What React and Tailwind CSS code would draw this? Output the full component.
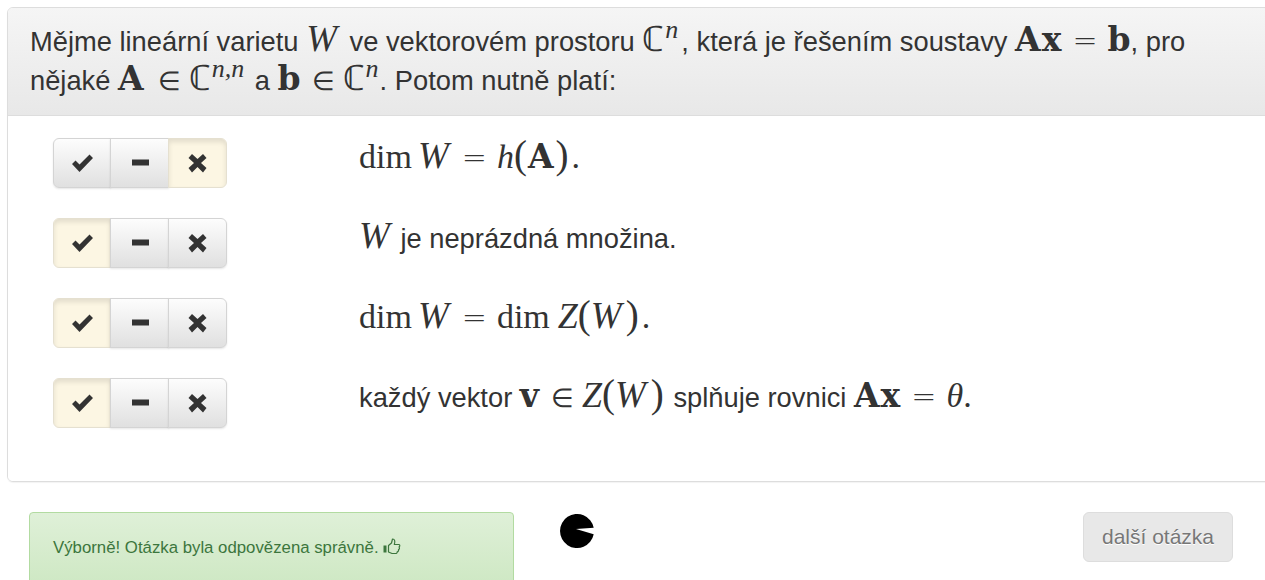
const upright = '[font-family:"Liberation_Serif",serif] text-[34px] leading-none'

function V({ children, className = '' }) {
  return <span className={`[font-family:"Liberation_Serif",serif] text-[34px] leading-none italic ${className}`}>{children}</span>
}

// the W of the formulas is wider than Liberation's
function W({ className = 'mr-[4px]' }) {
  return <span className={`[font-family:"Liberation_Serif",serif] text-[37px] leading-none italic ${className}`}>W</span>
}

function B({ children, className = '' }) {
  return <span className={`[font-family:"DejaVu_Serif",serif] text-[33px] leading-none font-bold ${className}`}>{children}</span>
}

function Eq({ className = 'mx-[10px]' }) {
  return <span className={`[font-family:"DejaVu_Sans",sans-serif] text-[30px] leading-none font-extralight ${className}`}>=</span>
}

function In({ className = 'ml-[11px] mr-[8px]' }) {
  return <span className={`[font-family:"Liberation_Serif",serif] text-[26px] leading-none ${className}`}>∈</span>
}

function Paren({ children, className = '' }) {
  return <span className={`[font-family:"Liberation_Serif",serif] text-[39px] leading-none ${className}`}>{children}</span>
}

function CC({ sup, className = 'mr-[3px]' }) {
  return (
    <span className="whitespace-nowrap">
      <span className='[font-family:"DejaVu_Sans",serif] text-[35px] leading-none font-extralight'>ℂ</span>
      <sup className={`[font-family:"Liberation_Serif",serif] text-[26px] leading-none italic top-[-0.5em] ml-[1px] ${className}`}>{sup}</sup>
    </span>
  )
}

function Pacman() {
  return (
    <svg width="35" height="34" viewBox="0 0 35 34" className="blur-[0.4px]">
      <path d="M33.7 13.7 A17 17 0 1 0 33.7 20.3 L16 15 Z" fill="#000" />
    </svg>
  )
}

function ThumbIcon() {
  return (
    <svg width="18" height="18" viewBox="0 0 18 18" className="ml-[4px] shrink-0" fill="none">
      <rect x="0.5" y="7.5" width="3" height="7" fill="#3c763d" />
      <path d="M5.5 7.5 L8.5 5 L9.5 1 C11.5 0.8 12.5 3 11.3 6.5 L16 6.5 C17.2 7 17 8.5 16 9 C16.8 10 16.5 11.3 15.5 11.5 C15.9 12.8 15 13.8 14.2 13.8 C14.3 15 13.5 15.5 12.5 15.5 L9 15.5 L5.5 14 Z" stroke="#3c763d" strokeWidth="1.2" strokeLinejoin="round" />
    </svg>
  )
}

function ToggleGroup({ active }) {
  const items = [
    {
      key: 'yes',
      icon: <path d="M0 11 L3.5 7.5 L7.5 11.5 L17.5 1.5 L21 5 L7.5 19 Z" fill="#333" />,
    },
    {
      key: 'skip',
      icon: <rect x="3" y="6.5" width="17" height="6" fill="#333" />,
    },
    {
      key: 'no',
      icon: <path d="M5 1 L10.5 6 L16 1 L19.5 5 L14 10 L19.5 15 L16 19.5 L10.5 14 L5 19.5 L1.5 15 L7 10 L1.5 5 Z" fill="#333" />,
    },
  ]
  return (
    <div className="flex h-[50px] w-[174px] shrink-0">
      {items.map((item, i) => {
        const isActive = item.key === active
        return (
          <div
            key={item.key}
            className={`flex h-full w-[58px] items-center justify-center border border-[#d4d4d4] ${i > 0 ? '-ml-px w-[59px]' : ''} ${i === 0 ? 'rounded-l-[6px]' : ''} ${i === 2 ? 'rounded-r-[6px]' : ''} ${isActive ? 'bg-[#fcf6e3] shadow-[inset_0_3px_5px_rgba(0,0,0,0.1)] border-[#e5e0d0]' : 'bg-gradient-to-b from-[#fdfdfd] to-[#e0e0e0] shadow-[0_1px_2px_rgba(0,0,0,0.1)]'}`}
          >
            <svg width="21" height="21" viewBox="0 0 21 21">{item.icon}</svg>
          </div>
        )
      })}
    </div>
  )
}

function Row({ active, lift, children }) {
  return (
    <div className="flex h-[50px] items-start">
      <ToggleGroup active={active} />
      <div className={`ml-[132px] h-[40px] text-[27.3px] leading-[38px] whitespace-nowrap ${lift}`}>{children}</div>
    </div>
  )
}

export default function App() {
  return (
    <div className='h-[580px] w-[1265px] overflow-hidden bg-white font-["Liberation_Sans",Arial,sans-serif] text-[#333]'>
      <div className="ml-[7px] mt-[7px] w-[1290px] overflow-hidden rounded-[6px] border border-[#ddd] shadow-[0_1px_1px_rgba(0,0,0,0.05)]">
        <div className="h-[108px] border-b border-[#ddd] bg-gradient-to-b from-[#f5f5f5] to-[#e8e8e8] pl-[22px] pt-[12px] text-[27.3px] leading-[39px]">
          <div className="whitespace-nowrap">
            Mějme lineární varietu <W className="mr-[5px]" /> ve vektorovém prostoru <CC sup="n" />, která je řešením soustavy <B className="tracking-[1px]">Ax</B><Eq /><B>b</B>, pro
          </div>
          <div className="whitespace-nowrap">
            nějaké <B className="mr-[3px]">A</B><In /><CC sup="n,n" /> a <B>b</B><In /><CC sup="n" className="mr-[1px]" />. Potom nutně platí:
          </div>
        </div>
        <div className="flex h-[365px] flex-col gap-[30px] bg-white pl-[45px] pt-[22px]">
          <Row active="no" lift="-mt-[3px]">
            <span className={upright}>dim</span><W className="ml-[6px] mr-[3px]" /><Eq /><V>h</V><Paren>(</Paren><B className="mx-[1px]">A</B><Paren className="ml-[1px]">)</Paren><span className={`${upright} ml-[3px]`}>.</span>
          </Row>
          <Row active="yes" lift="-mt-[1px]">
            <W className="mr-[3px]" /> je neprázdná množina.
          </Row>
          <Row active="yes" lift="-mt-[3px]">
            <span className={upright}>dim</span><W className="ml-[6px] mr-[3px]" /><Eq /><span className={upright}>dim</span><V className="ml-[8px] text-[36px]">Z</V><Paren>(</Paren><W /><Paren>)</Paren><span className={`${upright} ml-[3px]`}>.</span>
          </Row>
          <Row active="yes" lift="-mt-[4px]">
            každý vektor <B className="text-[27px]">v</B><In className="ml-[12px] mr-[8px]" /><V className="text-[36px]">Z</V><Paren>(</Paren><W className="mr-[5px]" /><Paren className="mr-[2px]">)</Paren> splňuje rovnici <B className="tracking-[1px]">Ax</B><Eq /><V>θ</V><span className={upright}>.</span>
          </Row>
        </div>
      </div>
      <div className="mt-[30px] flex items-start">
        <div className="ml-[29px] flex h-[100px] w-[485px] shrink-0 items-start rounded-[4px] border border-[#b2dba1] bg-gradient-to-b from-[#dff0d8] to-[#c8e5bc] pl-[23px] pt-[25px] text-[16.8px] leading-[20px] text-[#3c763d]">
          Výborně! Otázka byla odpovězena správně.
          <ThumbIcon />
        </div>
        <div className="ml-[46px] mt-[2px] shrink-0">
          <Pacman />
        </div>
        <div className="ml-[488px] flex h-[50px] w-[150px] shrink-0 items-center justify-center rounded-[6px] border border-[#ddd] bg-[#e8e8e8] text-[21px] text-[#777] [text-shadow:0_1px_0_#fff]">
          další otázka
        </div>
      </div>
    </div>
  )
}
